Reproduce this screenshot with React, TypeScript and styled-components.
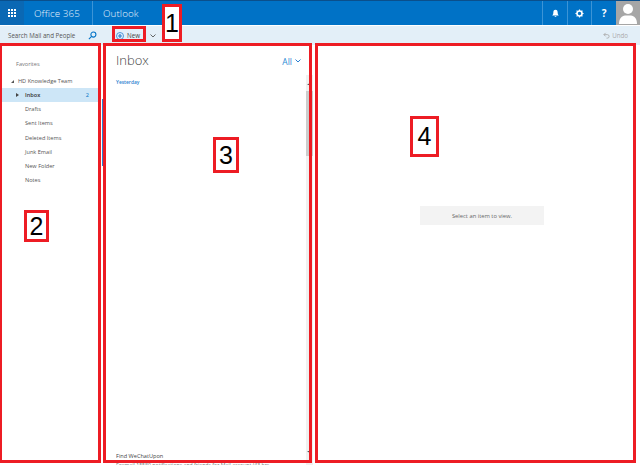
import React from 'react';
import styled, { createGlobalStyle, css } from 'styled-components';

const GlobalStyle = createGlobalStyle`
  html, body {
    margin: 0;
    padding: 0;
    background: #fff;
  }
  body {
    font-family: 'Open Sans', 'Liberation Sans', sans-serif;
  }
`;

const Page = styled.div`
  position: relative;
  width: 640px;
  height: 465px;
  overflow: hidden;
  display: flex;
  flex-direction: column;
`;

const TopBar = styled.header`
  flex: 0 0 24px;
  display: flex;
  align-items: stretch;
  background: #0072c6;
  border-top: 1px solid #0a4f8c;
  box-sizing: border-box;
`;
const Waffle = styled.div`
  flex: 0 0 24px;
  display: grid;
  grid-template-columns: repeat(3, 2px);
  grid-auto-rows: 2px;
  gap: 1px;
  align-content: center;
  justify-content: center;
  background: #0a68b4;
  i { background: #fff; }
`;
const Brand = styled.div<{ $width: number }>`
  flex: 0 0 ${p => p.$width}px;
  box-sizing: border-box;
  display: flex;
  align-items: center;
  padding-left: 10px;
  color: #e6f1fa;
  font-size: 9.8px;
  font-weight: 300;
  letter-spacing: 0.1px;
  & + & { border-left: 1px solid #3c94d6; }
`;
const Spacer = styled.div`
  flex: 1;
`;
const TopIcon = styled.div`
  flex: 0 0 24.6px;
  box-sizing: border-box;
  border-left: 1px solid #3c94d6;
  display: flex;
  align-items: center;
  justify-content: center;
  color: #fff;
  font-size: 10px;
  font-weight: 700;
`;
const Avatar = styled.div`
  flex: 0 0 24px;
  background: #a6a6a6;
  overflow: hidden;
  svg { display: block; }
`;

const ToolBar = styled.div`
  flex: 0 0 19px;
  margin-top: 1px;
  display: flex;
  align-items: center;
  background: #e3eff8;
  color: #444;
  font-size: 6.2px;
`;
const SearchBox = styled.div`
  flex: 0 0 104px;
  box-sizing: border-box;
  padding: 0 7px 0 8px;
  display: flex;
  align-items: center;
  justify-content: space-between;
  color: #555;
`;
const NewButton = styled.div`
  margin-left: 12px;
  display: flex;
  align-items: center;
  gap: 3px;
  width: 40px;
  color: #444;
`;
const Undo = styled.div`
  margin-left: auto;
  margin-right: 12px;
  display: flex;
  align-items: center;
  gap: 2px;
  color: #aaa;
`;

const Main = styled.main`
  flex: 1;
  min-height: 0;
  display: flex;
`;
const NavPane = styled.nav`
  flex: 0 0 102px;
  box-sizing: border-box;
  padding-top: 13px;
  border-right: 1px solid #fff;
  color: #555;
  font-size: 5.6px;
`;
const NavHeading = styled.div`
  padding-left: 16px;
  height: 12px;
  line-height: 12px;
  color: #777;
`;
const AccountRow = styled.div`
  margin-top: 4px;
  height: 14px;
  padding-left: 11px;
  display: flex;
  align-items: center;
  gap: 4px;
  color: #555;
`;
const FolderRow = styled.div<{ $active?: boolean }>`
  height: 14.2px;
  padding: 0 12px 0 25px;
  position: relative;
  display: flex;
  align-items: center;
  justify-content: space-between;
  ${p =>
    p.$active &&
    css`
      background: #cde6f7;
      color: #333;
      font-weight: 600;
    `}
`;
const Caret = styled.span`
  position: absolute;
  left: 16px;
  top: 5px;
  border-left: 3px solid #444;
  border-top: 2px solid transparent;
  border-bottom: 2px solid transparent;
`;
const Count = styled.span`
  color: #0072c6;
  font-weight: 400;
`;
const ListPane = styled.section`
  flex: 0 0 212px;
  box-sizing: border-box;
  position: relative;
  display: flex;
  flex-direction: column;
  padding-left: 14px;
`;
const AccentBar = styled.div`
  position: absolute;
  left: 0;
  top: 54px;
  width: 1px;
  height: 67px;
  background: #2a7fd0;
`;
const ListHead = styled.div`
  flex: 0 0 30px;
  display: flex;
  align-items: center;
  justify-content: space-between;
  padding: 2px 13px 0 0;
  box-sizing: border-box;
`;
const ListTitle = styled.h2`
  margin: -2px 0 0;
  font-size: 13px;
  font-weight: 300;
  color: #444;
`;
const Filter = styled.div`
  display: flex;
  align-items: center;
  gap: 3px;
  color: #2a8ad4;
  font-size: 8.5px;
`;
const ListBody = styled.div`
  flex: 1;
  min-height: 0;
  display: flex;
`;
const Messages = styled.div`
  flex: 1;
  min-width: 0;
  display: flex;
  flex-direction: column;
`;
const DayLabel = styled.div`
  font-size: 4.9px;
  font-weight: 600;
  color: #2a7fd0;
  padding-top: 3px;
  line-height: 8px;
`;
const MessagePreview = styled.div`
  margin-top: auto;
  margin-bottom: -5px;
  color: #444;
  line-height: 9px;
  font-size: 5.6px;
  span { display: block; white-space: nowrap; overflow: hidden; }
  span + span { font-size: 5.2px; color: #777; }
`;
const ScrollBar = styled.div`
  flex: 0 0 7px;
  margin-right: 1px;
  margin-left: -1px;
  padding-bottom: 5px;
  display: flex;
  flex-direction: column;
  background: #f0f0f0;
`;
const ScrollArrow = styled.div<{ $down?: boolean }>`
  flex: 0 0 16px;
  display: flex;
  align-items: center;
  justify-content: flex-start;
  padding-left: 1px;
  ${p => p.$down && 'margin-top: auto;'}
`;
const ScrollThumb = styled.div`
  flex: 0 0 65px;
  background: #cdcdcd;
`;
const ReadingPane = styled.section`
  flex: 1;
  display: flex;
  justify-content: center;
  padding-top: 161px;
`;
const EmptyNote = styled.div`
  width: 124px;
  height: 19px;
  margin-left: 10px;
  background: #f3f3f3;
  color: #666;
  font-size: 5.8px;
  display: flex;
  align-items: center;
  justify-content: center;
`;

type Rect = { $x: number; $y: number; $w: number; $h: number };
const rect = css<Rect>`
  position: absolute;
  left: ${p => p.$x}px;
  top: ${p => p.$y}px;
  width: ${p => p.$w}px;
  height: ${p => p.$h}px;
  box-sizing: border-box;
  border: 3px solid #ed1c24;
`;
const Outline = styled.div<Rect>`
  ${rect}
`;
const Callout = styled.div<Rect>`
  ${rect}
  background: #fff;
  color: #000;
  font-family: 'Liberation Sans', sans-serif;
  font-size: 25px;
  display: flex;
  align-items: center;
  justify-content: center;
`;

const folders = ['Drafts', 'Sent Items', 'Deleted Items', 'Junk Email', 'New Folder', 'Notes'];

const App: React.FC = () => (
  <Page>
    <GlobalStyle />
    <TopBar>
      <Waffle>
        {Array.from({ length: 9 }, (_, i) => (
          <i key={i} />
        ))}
      </Waffle>
      <Brand $width={68}>Office 365</Brand>
      <Brand $width={60}>Outlook</Brand>
      <Spacer />
      <TopIcon>
        <svg width="9" height="9" viewBox="0 0 10 10" fill="#fff">
          <path d="M5 0.8C3.2 0.8 2.6 2.2 2.6 3.8c0 1.6-.5 2.5-1.3 3.3h7.4c-.8-.8-1.3-1.7-1.3-3.3C7.4 2.2 6.8.8 5 .8zM4 8h2a1 1 0 0 1-2 0z" />
        </svg>
      </TopIcon>
      <TopIcon>
        <svg width="9" height="9" viewBox="0 0 10 10">
          <circle cx="5" cy="5" r="2.8" fill="none" stroke="#fff" strokeWidth="1.8" />
          <path d="M5 .5v1.6M5 7.9v1.6M.5 5h1.6M7.9 5h1.6M1.8 1.8l1.1 1.1M7.1 7.1l1.1 1.1M8.2 1.8L7.1 2.9M2.9 7.1L1.8 8.2" stroke="#fff" strokeWidth="1.3" />
        </svg>
      </TopIcon>
      <TopIcon>?</TopIcon>
      <Avatar>
        <svg width="24" height="24" viewBox="0 0 24 24" fill="#fff">
          <circle cx="12" cy="8" r="5" />
          <path d="M3 23c0-6 3-8 6-8.500h6c3 .5 6 2.500 6 8.500z" />
        </svg>
      </Avatar>
    </TopBar>
    <ToolBar>
      <SearchBox>
        Search Mail and People
        <svg width="9" height="9" viewBox="0 0 10 10" fill="none" stroke="#0072c6" strokeWidth="1.2">
          <circle cx="6" cy="4" r="2.8" />
          <path d="M4 6L1 9" />
        </svg>
      </SearchBox>
      <NewButton>
        <svg width="8" height="8" viewBox="0 0 8 8">
          <circle cx="4" cy="4" r="3.5" fill="none" stroke="#2a7fd0" strokeWidth=".8" />
          <path d="M4 2v4M2 4h4" stroke="#2a7fd0" strokeWidth="1.2" />
        </svg>
        New
        <svg width="6" height="4" viewBox="0 0 6 4" fill="none" stroke="#555" strokeWidth=".9" style={{ marginLeft: 'auto' }}>
          <path d="M.5.5L3 3 5.500.5" />
        </svg>
      </NewButton>
      <Undo>
        <svg width="7" height="7" viewBox="0 0 8 8" fill="none" stroke="#aaa" strokeWidth="1">
          <path d="M1 3h4a2 2 0 0 1 0 4H4M3 1L1 3l2 2" />
        </svg>
        Undo
      </Undo>
    </ToolBar>
    <Main>
      <NavPane>
        <NavHeading>Favorites</NavHeading>
        <AccountRow>
          <svg width="3" height="3" viewBox="0 0 3 3" fill="#555">
            <path d="M3 0v3H0z" />
          </svg>
          HD Knowledge Team
        </AccountRow>
        <FolderRow $active>
          <Caret />
          Inbox
          <Count>2</Count>
        </FolderRow>
        {folders.map(name => (
          <FolderRow key={name}>{name}</FolderRow>
        ))}
      </NavPane>
      <ListPane>
        <AccentBar />
        <ListHead>
          <ListTitle>Inbox</ListTitle>
          <Filter>
            All
            <svg width="6" height="4" viewBox="0 0 6 4" fill="none" stroke="#2a7fd0" strokeWidth="1">
              <path d="M.5.5L3 3 5.500.5" />
            </svg>
          </Filter>
        </ListHead>
        <ListBody>
          <Messages>
            <DayLabel>Yesterday</DayLabel>
            <MessagePreview>
              <span>Find WeChatUpon</span>
              <span>Foxmail 15580 notifications and friends for Mail account (43 hrs</span>
            </MessagePreview>
          </Messages>
          <ScrollBar>
            <ScrollArrow>
              <svg width="4" height="3" viewBox="0 0 4 3" fill="#555">
                <path d="M4 0v3H0z" />
              </svg>
            </ScrollArrow>
            <ScrollThumb />
            <ScrollArrow $down>
              <svg width="4" height="3" viewBox="0 0 4 3" fill="#555">
                <path d="M0 0h4v3z" />
              </svg>
            </ScrollArrow>
          </ScrollBar>
        </ListBody>
      </ListPane>
      <ReadingPane>
        <EmptyNote>Select an item to view.</EmptyNote>
      </ReadingPane>
    </Main>
    <Outline $x={-1} $y={43} $w={102} $h={420} />
    <Outline $x={103} $y={43} $w={209} $h={420} />
    <Outline $x={315} $y={43} $w={321} $h={420} />
    <Outline $x={112} $y={26} $w={34} $h={16} />
    <Callout $x={162} $y={4} $w={20} $h={38}>1</Callout>
    <Callout $x={24} $y={210} $w={25} $h={32}>2</Callout>
    <Callout $x={213} $y={137} $w={26} $h={36}>3</Callout>
    <Callout $x={410} $y={116} $w={29} $h={41}>4</Callout>
  </Page>
);

export default App;
